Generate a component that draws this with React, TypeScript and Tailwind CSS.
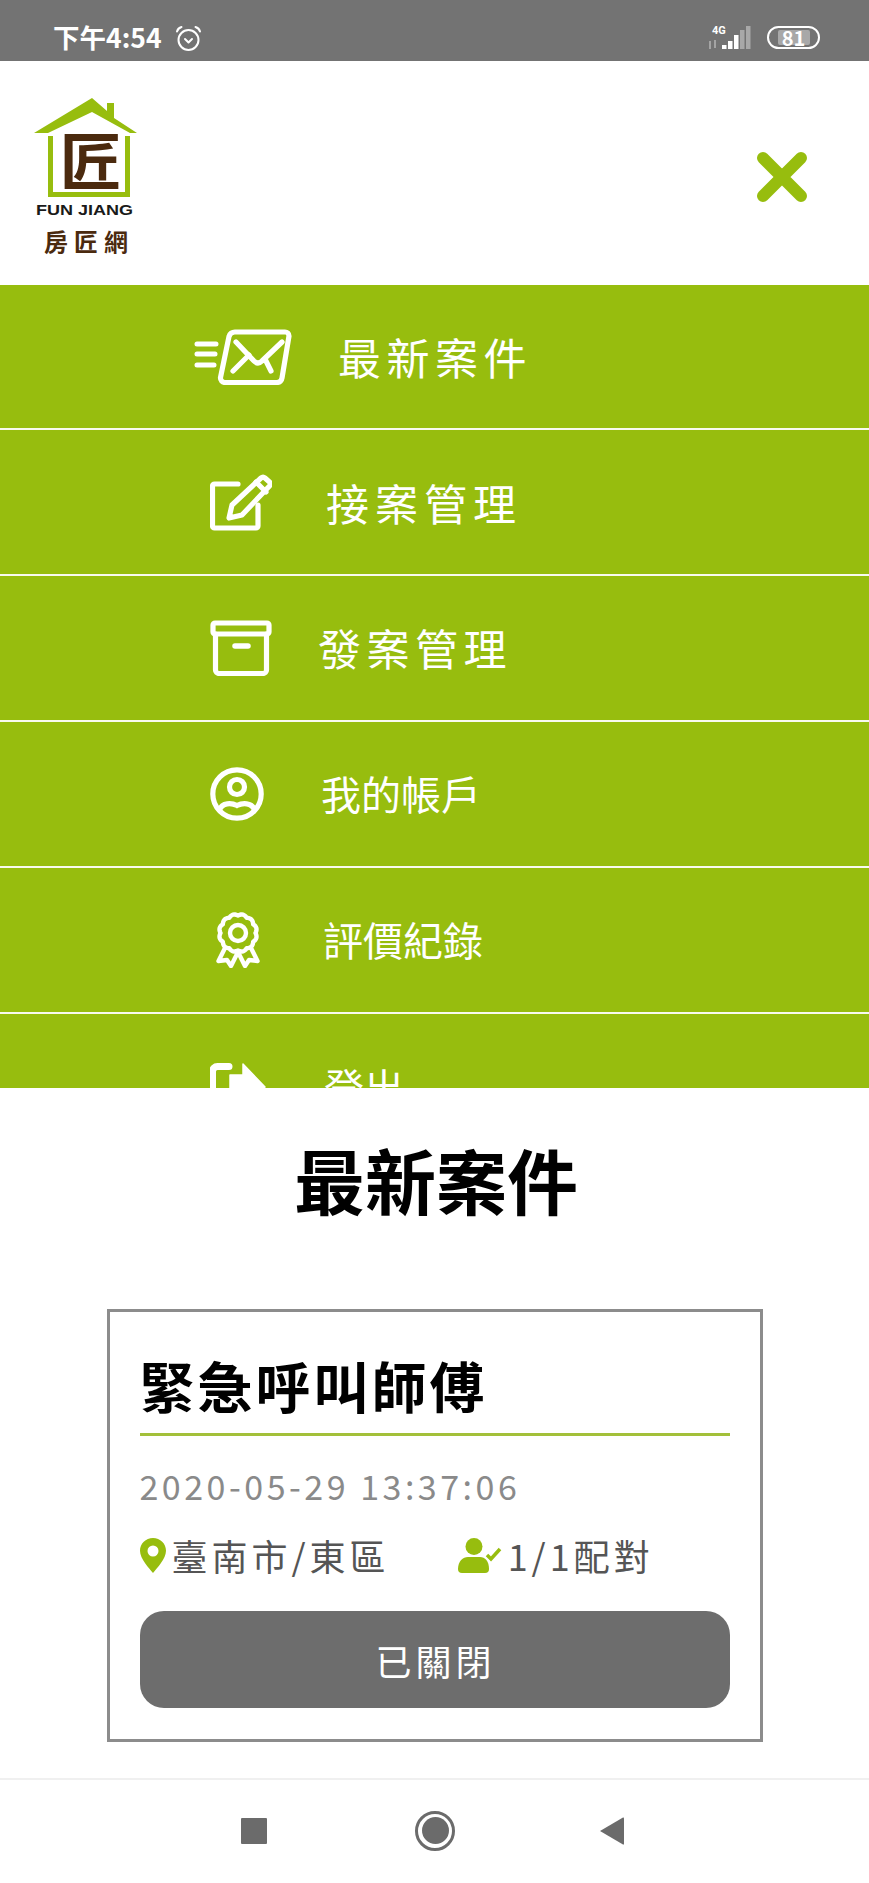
import React from "react";

const GREEN = "#97bd0e";

function scallop(cx: number, cy: number, r: number, amp: number, lobes: number) {
  const pts: string[] = [];
  for (let i = 0; i < 120; i++) {
    const a = (i / 120) * Math.PI * 2;
    const rr = r + amp * Math.abs(Math.sin((a * lobes) / 2));
    pts.push(`${(cx + rr * Math.cos(a)).toFixed(2)},${(cy + rr * Math.sin(a)).toFixed(2)}`);
  }
  return `M${pts.join("L")}Z`;
}

const MailIcon = () => (
  <svg width="98" height="56" viewBox="0 0 98 56" fill="none" stroke="white" strokeWidth="5.2" strokeLinecap="round" strokeLinejoin="round">
    <path d="M3 15H22M3 25H21M3 36H20" strokeWidth="5" />
    <path d="M41 3H91a4 4 0 0 1 4 4L88 49a5 5 0 0 1-5 4.500H31a4.500 4.500 0 0 1-4.500-5L35 7.500a6 6 0 0 1 6-4.500Z" />
    <path d="M42 13L60 32Q64 36 68 32L88 13" />
    <path d="M39 42L55 26M77 42L71 30" />
  </svg>
);
const EditIcon = () => (
  <svg width="62" height="57" viewBox="0 0 62 57" fill="none" stroke="white" strokeWidth="5.2" strokeLinejoin="round" strokeLinecap="round">
    <path d="M28 10H4.500a2 2 0 0 0-2 2V52a2 2 0 0 0 2 2H46a2 2 0 0 0 2-2V31" />
    <path d="M19 44L22 31L51 4a3 3 0 0 1 4 0L59.500 8a3 3 0 0 1 0 4L32 41Z" />
    <path d="M46 8L56 18" />
  </svg>
);
const BoxIcon = () => (
  <svg width="62" height="56" viewBox="0 0 62 56" fill="none" stroke="white" strokeWidth="5.2" strokeLinejoin="round" strokeLinecap="round">
    <rect x="3" y="3" width="56" height="11" rx="2" />
    <path d="M5.500 14V50a3.500 3.500 0 0 0 3.500 3.500H53a3.500 3.500 0 0 0 3.500-3.500V14" />
    <path d="M25 26H38" strokeWidth="5.500" />
  </svg>
);
const UserIcon = () => (
  <svg width="54" height="54" viewBox="0 0 54 54" fill="none" stroke="white" strokeWidth="5.2" strokeLinecap="round">
    <circle cx="27" cy="27" r="24.200" />
    <circle cx="27" cy="20" r="7.500" />
    <path d="M9.500 43C12 35 22 36 27 38.500C32 36 42 35 44.500 43" />
  </svg>
);
const AwardIcon = () => (
  <svg width="44" height="56" viewBox="0 0 44 56" fill="none" stroke="white" strokeWidth="4.4" strokeLinejoin="round" strokeLinecap="round">
    <path d={scallop(22, 21, 17.5, 1.5, 12)} />
    <circle cx="22" cy="21" r="8" />
    <path d="M9 36L2.500 49L11 48L15 54L21 42" />
    <path d="M35 36L41.500 49L33 48L29 54L23 42" />
  </svg>
);
const LogoutIcon = () => (
  <svg width="56" height="48" viewBox="0 0 56 48" fill="white">
    <path d="M19 3.500H7.500a5 5 0 0 0-5 5V40a5 5 0 0 0 5 5H19" fill="none" stroke="white" strokeWidth="7" strokeLinecap="round" />
    <path d="M33 1L55 24L33 47V36H20V12H33Z" strokeLinejoin="round" stroke="white" strokeWidth="1.500" />
  </svg>
);

const rows = [
  { Icon: MailIcon, h: "h-[145px]", pad: "pl-[194px]", gap: "ml-[46px]", text: "最新案件", cls: "text-[43px] tracking-[5.500px] -mt-[1px]", label: "mail" },
  { Icon: EditIcon, h: "h-[146px]", pad: "pl-[210px]", gap: "ml-[54px]", text: "接案管理", cls: "text-[43px] tracking-[6px]", label: "edit" },
  { Icon: BoxIcon, h: "h-[146px]", pad: "pl-[210px]", gap: "ml-[46px]", text: "發案管理", cls: "text-[43px] tracking-[5.500px] -mt-[1px]", label: "box" },
  { Icon: UserIcon, h: "h-[146px]", pad: "pl-[210px]", gap: "ml-[57px]", text: "我的帳戶", cls: "text-[40px] -mt-[2px]", label: "user" },
  { Icon: AwardIcon, h: "h-[146px]", pad: "pl-[216px]", gap: "ml-[63px]", text: "評價紀錄", cls: "text-[40px] -mt-[2px]", label: "award" },
];

export default function App() {
  return (
    <div className="flex h-[1883px] w-[869px] flex-col overflow-hidden bg-white font-['Noto_Sans_CJK_TC','Noto_Sans',sans-serif]">
      {/* status bar */}
      <div className="flex h-[61px] shrink-0 items-center bg-[#737373] pl-[53px] pr-[49px] pt-[14px] text-white">
        <span className="text-[26.500px] font-bold leading-none">下午4:54</span>
        <svg className="ml-[13px] mt-[1px]" width="27" height="27" viewBox="0 0 27 27" fill="none" stroke="white" strokeWidth="2" strokeLinecap="round" strokeLinejoin="round">
          <circle cx="13.500" cy="15" r="10" />
          <path d="M10 14L13.500 17.500L17 14" />
          <path d="M2 6.500Q3 3 6.500 2M25 6.500Q24 3 20.500 2" />
        </svg>
        <div className="ml-auto flex items-center gap-[14px]">
          <svg width="45" height="30" viewBox="0 0 45 30">
            <rect x="14" y="22" width="4.500" height="4" fill="white" />
            <rect x="20" y="18" width="4.500" height="8" fill="white" />
            <rect x="26" y="12" width="4.500" height="14" fill="white" />
            <rect x="32" y="7" width="4.500" height="19" fill="#a8a8a8" />
            <rect x="38" y="3" width="4.500" height="23" fill="#a8a8a8" />
            <path d="M2 18V26M7 17V25" stroke="#b5b5b5" strokeWidth="1.500" />
            <text x="4" y="11" fill="white" fontSize="11" fontWeight="700" fontFamily="Roboto, sans-serif">4G</text>
          </svg>
          <div className="flex h-[23px] w-[53px] items-center justify-center rounded-full border-2 border-white">
            <div className="flex h-[15px] w-[32px] items-center justify-center rounded-[2px] bg-[#a8a8a8] text-[20px] font-bold leading-none">81</div>
          </div>
        </div>
      </div>

      {/* header */}
      <div className="flex h-[224px] shrink-0 justify-between pl-[30px] pr-[61px] pt-[29px]">
        <svg width="112" height="170" viewBox="0 0 112 170">
          <path d="M62 8L77 21V13H84V28L107 43H100L62 22L18 43H4Z" fill={GREEN} />
          <path d="M20.500 46V104.500H97.500V46" fill="none" stroke={GREEN} strokeWidth="5" />
          <text x="61" y="95" textAnchor="middle" fontSize="62" fontWeight="700" fill="#4b2a0e">匠</text>
          <text x="6" y="125" fontSize="15" fontWeight="700" fill="#1a1a1a" textLength="97" lengthAdjust="spacingAndGlyphs" fontFamily="'Liberation Sans', sans-serif">FUN JIANG</text>
          <text x="14" y="161" fontSize="24" fontWeight="700" fill="#4b2a0e" letterSpacing="6">房匠網</text>
        </svg>
        <svg className="mt-[61px]" width="52" height="52" viewBox="0 0 52 52" fill="none" stroke={GREEN} strokeWidth="12" strokeLinecap="round">
          <path d="M7 7L45 45M45 7L7 45" />
        </svg>
      </div>

      {/* menu */}
      <div className="h-[803px] shrink-0 overflow-hidden bg-[#97bd0e] text-white">
        {rows.map(({ Icon, h, pad, gap, text, cls, label }) => (
          <div key={label} className={`flex items-center border-b-[2.500px] border-[#f8faee] ${h} ${pad}`}>
            <Icon />
            <span className={`${gap} ${cls}`}>{text}</span>
          </div>
        ))}
        <div className="flex h-[146px] items-center pl-[210px]">
          <LogoutIcon />
          <span className="ml-[58px] text-[40px] -mt-[2px]">登出</span>
        </div>
      </div>

      {/* main */}
      <div className="flex flex-1 flex-col items-center pt-[46px]">
        <h1 className="ml-[3px] text-[71px] font-bold leading-[88px] text-black">最新案件</h1>
        <div className="mt-[87px] flex h-[433px] w-[656px] flex-col border-[3px] border-[#8c8c8c] px-[30px]">
          <div className="h-[124px] border-b-[3px] border-[#a3c03a] pt-[37px]">
            <div className="text-[55px] font-bold leading-[70px] tracking-[3px] text-black">緊急呼叫師傅</div>
          </div>
          <div className="mt-[28px] text-[34px] leading-[44px] tracking-[3.500px] text-[#8a8a8a]">2020-05-29 13:37:06</div>
          <div className="mt-[24px] flex h-[46px] items-center text-[36px] tracking-[4px] text-[#555555]">
            <svg width="26" height="35" viewBox="0 0 26 35">
              <path fillRule="evenodd" d="M13 0C5.800 0 0 5.600 0 12.800C0 21 9 30 13 35C17 30 26 21 26 12.800C26 5.600 20.200 0 13 0ZM13 7.500A5.500 5.500 0 1 1 13 18.500A5.500 5.500 0 1 1 13 7.500Z" fill={GREEN} />
            </svg>
            <span className="ml-[6px]">臺南市/東區</span>
            <svg className="ml-[68px]" width="44" height="35" viewBox="0 0 44 35" fill={GREEN}>
              <circle cx="16" cy="8.500" r="8.500" />
              <path d="M0 31C0 23 5 19 10 19H22C27 19 31 23 31 31A4 4 0 0 1 27 35H4A4 4 0 0 1 0 31Z" />
              <path d="M29 17L33 21L42 11" fill="none" stroke={GREEN} strokeWidth="3.500" />
            </svg>
            <span className="ml-[6px]">1/1配對</span>
          </div>
          <div className="mt-[33px] flex h-[97px] items-center justify-center rounded-[24px] bg-[#6d6d6d] pl-[2px] text-[36px] tracking-[4px] text-white">已關閉</div>
        </div>
      </div>

      {/* nav */}
      <div className="flex h-[105px] shrink-0 items-center border-t-2 border-[#f0f0f0] pb-[2px] pl-[241px]">
        <div className="h-[26px] w-[26px] rounded-[1px] bg-[#6b6b6b]" />
        <div className="ml-[148px] flex h-[40px] w-[40px] items-center justify-center rounded-full border-[3px] border-[#6b6b6b]">
          <div className="h-[27px] w-[27px] rounded-full bg-[#6b6b6b]" />
        </div>
        <svg className="ml-[144px]" width="26" height="30" viewBox="0 0 26 30">
          <path d="M1 15L24 1.500Q25 1 25 2.500V27.500Q25 29 24 28.500Z" fill="#6b6b6b" />
        </svg>
      </div>
    </div>
  );
}
